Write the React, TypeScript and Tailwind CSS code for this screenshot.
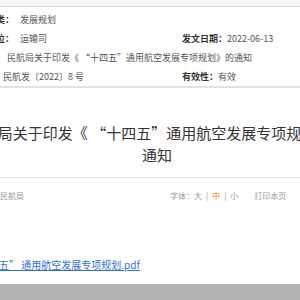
const font = "font-['Noto_Sans_CJK_SC','Noto_Sans',sans-serif]"

export default function App() {
  return (
    <div className={`w-[300px] h-[300px] overflow-hidden bg-white ${font}`}>
      <div className="h-[6px] bg-[#f6f6f6]" />
      {/* info box */}
      <div className="border-t border-[#dcdcdc] border-b-2 border-b-[#e2e2e2] pt-[3px] text-[9px] leading-[19px] text-[#555] whitespace-nowrap">
        <div className="flex">
          <span className="-ml-[13px] w-[33px] font-bold text-[#333]">分类：</span>
          <span>发展规划</span>
        </div>
        <div className="flex">
          <div className="flex w-[182px]">
            <span className="-ml-[13px] w-[33px] font-bold text-[#333]">单位：</span>
            <span>运输司</span>
          </div>
          <span className="w-[45px] font-bold text-[#333]">发文日期：</span>
          <span>2022-06-13</span>
        </div>
        <div className="pl-[7px]">民航局关于印发《 “十四五”通用航空发展专项规划》的通知</div>
        <div className="flex">
          <span className="w-[182px] pl-[3px]">民航发〔2022〕8 号</span>
          <span className="w-[36px] font-bold text-[#333]">有效性：</span>
          <span>有效</span>
        </div>
      </div>

      {/* title */}
      <div className="-ml-[50px] mt-[34px] w-[414px] text-center text-[15px] leading-[22px] text-[#333] whitespace-nowrap">
        民航局关于印发《 “十四五”通用航空发展专项规划》的
        <br />
        通知
      </div>

      <div className="mt-[11px] border-t border-[#e6e6e6]" />

      {/* source / font size */}
      <div className="mt-[12px] flex text-[8px] leading-[12px] text-[#999] whitespace-nowrap">
        <span className="w-[170px]">民航局</span>
        <span>字体：大</span>
        <span className="px-[4px]">|</span>
        <span className="text-[#ff7a00]">中</span>
        <span className="px-[4px]">|</span>
        <span>小</span>
        <span className="ml-[16px]">打印本页</span>
      </div>

      {/* attachment */}
      <div className="mt-[56px] -ml-[31px] text-[10px] leading-[14px] whitespace-nowrap">
        <a className="text-[#2f6fd6] underline">
          “十四五” 通用航空发展专项规划.pdf
        </a>
      </div>

      <div className="mt-[12px] h-[20px] bg-[#b3b3b3]" />
    </div>
  )
}
